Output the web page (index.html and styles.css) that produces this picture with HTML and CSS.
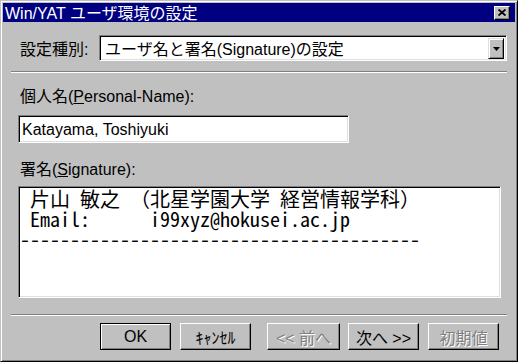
FILE: index.html
```html
<!DOCTYPE html>
<html lang="ja">
<head>
    <meta charset="UTF-8">
    <title>Win/YAT ユーザ環境の設定</title>
    <link rel="stylesheet" href="styles.css">
</head>
<body>
    <div class="window">
        <div class="titlebar">
            <span class="title">Win/YAT ユーザ環境の設定</span>
            <span class="close-btn">
                <svg width="8" height="7" viewBox="0 0 8 7">
                    <path d="M0.5 0.5 L7.5 6.5 M7.5 0.5 L0.5 6.5" stroke="#000" stroke-width="1.8" fill="none"/>
                </svg>
            </span>
        </div>

        <div class="client">
            <div class="kind-row">
                <span class="kind-label">設定種別:</span>
                <div class="combo">
                    <span class="combo-text">ユーザ名と署名(Signature)の設定</span>
                    <span class="combo-btn">
                        <svg width="7" height="4" viewBox="0 0 7 4">
                            <path d="M0 0 H7 L3.5 4 Z" fill="#000"/>
                        </svg>
                    </span>
                </div>
            </div>

            <div class="separator sep-top"></div>

            <div class="field-label label-name">個人名(<u>P</u>ersonal-Name):</div>
            <div class="textbox">Katayama, Toshiyuki</div>

            <div class="field-label label-sig">署名(<u>S</u>ignature):</div>
            <div class="memo"><pre class="memo-text"> 片山 敏之 （北星学園大学 経営情報学科）
 Email:      i99xyz@hokusei.ac.jp
----------------------------------------</pre></div>

            <div class="separator sep-bottom"></div>

            <div class="buttons">
                <span class="btn btn-default">OK</span>
                <span class="btn btn-cancel">ｷｬﾝｾﾙ</span>
                <span class="btn btn-prev disabled">&lt;&lt; 前へ</span>
                <span class="btn btn-next">次へ &gt;&gt;</span>
                <span class="btn btn-reset disabled">初期値</span>
            </div>
        </div>
    </div>
</body>
</html>
```

FILE: styles.css
```css
:root {
    --face: #c0c0c0;
    --shadow: #808080;
    --light: #dfdfdf;
    --navy: #000080;
}

* {
    margin: 0;
    padding: 0;
    box-sizing: border-box;
}

body {
    background: var(--face);
    font-family: "Liberation Sans", "Noto Sans CJK JP", sans-serif;
    font-size: 16px;
    color: #000;
}

.window {
    width: 518px;
    height: 362px;
    background: var(--face);
    border: 1px solid;
    border-color: var(--face) #000 #000 var(--face);
    box-shadow: inset 1px 1px #fff, inset -1px -1px var(--shadow);
    padding: 2px;
    display: flex;
    flex-direction: column;
}

/* Title bar */
.titlebar {
    height: 19px;
    background: var(--navy);
    color: #fff;
    display: flex;
    align-items: center;
    padding-left: 2px;
}

.title {
    flex: 1;
    line-height: 17px;
    padding-top: 2px;
    white-space: nowrap;
}

.close-btn {
    width: 16px;
    height: 14px;
    margin-right: 5px;
    background: var(--face);
    border: 1px solid;
    border-color: #fff #000 #000 #fff;
    box-shadow: inset -1px -1px var(--shadow);
    display: flex;
    align-items: center;
    justify-content: center;
    padding-bottom: 1px;
}

/* Client area */
.client {
    flex: 1;
    padding: 13px 8px 0 8px;
    display: flex;
    flex-direction: column;
}

.kind-row {
    display: flex;
    align-items: center;
    height: 26px;
    padding-left: 9px;
}

.kind-label {
    width: 79px;
}

.combo {
    flex: 1;
    height: 26px;
    background: #fff;
    border: 1px solid;
    border-color: var(--shadow) #fff #fff var(--shadow);
    box-shadow: inset 1px 1px #000, inset -1px -1px var(--light);
    padding: 1px;
    display: flex;
    align-items: center;
}

.combo-text {
    flex: 1;
    padding-left: 4px;
    white-space: nowrap;
}

.combo-btn {
    width: 16px;
    height: 21px;
    margin: 1px 1px 0 0;
    background: var(--face);
    border: 1px solid;
    border-color: var(--light) #000 #000 var(--light);
    box-shadow: inset 1px 1px #fff, inset -1px -1px var(--shadow);
    display: flex;
    align-items: center;
    justify-content: center;
}

.separator {
    height: 2px;
    border-top: 1px solid var(--shadow);
    border-bottom: 1px solid #fff;
}

.sep-top {
    margin-top: 10px;
}

.field-label {
    padding-left: 9px;
    line-height: 18px;
    white-space: nowrap;
}

.label-name {
    margin-top: 15px;
}

.label-sig {
    margin-top: 18px;
}

.textbox {
    width: 331px;
    height: 28px;
    margin: 9px 0 0 7px;
    background: #fff;
    border: 1px solid;
    border-color: var(--shadow) #fff #fff var(--shadow);
    box-shadow: inset 1px 1px #000, inset -1px -1px var(--light);
    padding: 4px 0 0 3px;
    line-height: 20px;
    white-space: nowrap;
}

.memo {
    width: 483px;
    height: 112px;
    margin: 7px 0 0 7px;
    background: #fff;
    border: 1px solid;
    border-color: var(--shadow) #fff #fff var(--shadow);
    box-shadow: inset 1px 1px #000, inset -1px -1px var(--light);
    padding: 2px 0 0 1px;
}

.memo-text {
    font-family: "Noto Sans Mono CJK JP", "Liberation Mono", "Noto Sans CJK JP", monospace;
    font-size: 20px;
    line-height: 20px;
    white-space: pre;
}

.sep-bottom {
    margin-top: 16px;
}

/* Buttons */
.buttons {
    display: flex;
    justify-content: flex-end;
    margin-top: 7px;
    padding-right: 8px;
}

.btn {
    width: 71px;
    height: 27px;
    background: var(--face);
    border: 1px solid;
    border-color: #fff #000 #000 #fff;
    box-shadow: inset -1px -1px var(--shadow);
    display: flex;
    align-items: center;
    justify-content: center;
    white-space: nowrap;
}

.btn-default {
    border-color: #000;
    box-shadow: inset 1px 1px #fff, inset -1px -1px var(--shadow);
}

.btn-cancel {
    margin-left: 9px;
}

.btn-prev {
    width: 73px;
    margin-left: 16px;
}

.btn-next {
    margin-left: 8px;
}

.btn-reset {
    margin-left: 9px;
}

.disabled {
    color: var(--shadow);
    text-shadow: 1px 1px #fff;
}
```
